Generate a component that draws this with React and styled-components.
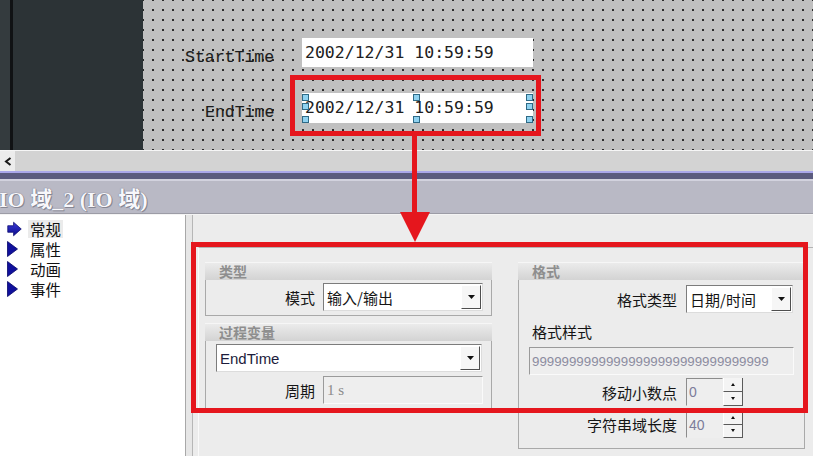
import React from "react";
import styled, { createGlobalStyle } from "styled-components";

const GlobalStyle = createGlobalStyle`
  html, body {
    margin: 0;
    padding: 0;
    background: #ececec;
    overflow: hidden;
  }
  #root {
    width: 813px;
    height: 456px;
  }
`;

const CJK = `"Noto Sans CJK SC", "Noto Sans", sans-serif`;
const RED = "#e5161d";

const Screen = styled.div`
  position: relative;
  width: 813px;
  height: 456px;
  overflow: hidden;
  display: flex;
  flex-direction: column;
  font-family: ${CJK};
  color: #141414;
`;

/* ---------- screen editor (top) ---------- */

const EditorArea = styled.div`
  display: flex;
  height: 150px;
  flex: none;
`;

const DarkPanel = styled.div`
  width: 143px;
  background: linear-gradient(to right, #343b3e 0 10px, #101214 10px 13px, #2c3336 13px);
`;

const Canvas = styled.div`
  position: relative;
  flex: 1;
  background-color: #c0c0c0;
  background-image: radial-gradient(circle, #2a2a2a 0 0.9px, transparent 1.4px);
  background-size: 10px 10px;
  background-position: -5px -5px;
`;

const CanvasLabel = styled.div`
  position: absolute;
  left: ${(p) => p.$x}px;
  top: ${(p) => p.$y}px;
  font-family: "Liberation Mono", "DejaVu Sans Mono", monospace;
  font-size: 16.5px;
  line-height: 20px;
  color: #1c1c1c;
  -webkit-text-stroke: 0.15px #1c1c1c;
  white-space: nowrap;
`;

const IOField = styled.div`
  position: absolute;
  left: ${(p) => p.$x}px;
  top: ${(p) => p.$y}px;
  width: 231px;
  height: ${(p) => p.$h}px;
  background: #ffffff;
  padding-left: 3px;
  box-sizing: border-box;
  font-family: "DejaVu Sans Mono", "Liberation Mono", monospace;
  font-size: 16.5px;
  line-height: ${(p) => p.$h}px;
  color: #202020;
  white-space: nowrap;
`;

const Handle = styled.span`
  position: absolute;
  left: ${(p) => p.$x}px;
  top: ${(p) => p.$y}px;
  width: 5px;
  height: 5px;
  background: #8fd2f0;
  border: 1px solid #2e6a86;
`;

/* ---------- scroll bar + inspector title ---------- */

const ScrollRow = styled.div`
  display: flex;
  height: 20px;
  flex: none;
  border-top: 1px solid #f6f6f6;
  background: #d3d3d3;
`;

const ScrollButton = styled.div`
  width: 15px;
  display: flex;
  align-items: center;
  justify-content: center;
  background: #ececec;
`;

const AccentBar = styled.div`
  height: 6px;
  flex: none;
  background: #5b5b7f;
  border-top: 2px solid #aaa7ea;
  border-bottom: 2px solid #d2d2de;
`;

const TitleBar = styled.div`
  height: 32px;
  flex: none;
  background: #b9b9c5;
  border-bottom: 1px solid #9c9ca6;
  display: flex;
  align-items: center;
`;

const Title = styled.span`
  margin-left: -1px;
  font-family: "Liberation Serif", "Noto Sans CJK SC", serif;
  font-weight: bold;
  font-size: 22px;
  color: #f7f7fb;
  text-shadow: 0 0 1px #55556a, 1px 1px 0 #8c8c98;
  white-space: nowrap;
`;

const TitleGap = styled.div`
  height: 1px;
  flex: none;
  background: #f4f4f4;
`;

/* ---------- inspector body ---------- */

const Body = styled.div`
  flex: 1;
  display: flex;
  min-height: 0;
`;

const Tree = styled.div`
  width: 185px;
  background: #ffffff;
  border-right: 1px solid #a8a8a8;
  padding-top: 4px;
  box-sizing: content-box;
`;

const TreeItem = styled.div`
  display: flex;
  align-items: center;
  height: 20px;
  padding-left: 7px;
  gap: 8px;
`;

const TreeText = styled.span`
  font-size: 15.5px;
  line-height: 18px;
  padding: 0 2px;
  margin-left: -2px;
  background: ${(p) => (p.$active ? "#ebebeb" : "transparent")};
  color: #111;
`;

const IconBox = styled.span`
  width: 15px;
  height: 16px;
  display: flex;
  align-items: center;
`;

const Gutter = styled.div`
  width: 6px;
  background: #e6e6e6;
  border-right: 1px solid #b6b6b6;
`;

const MainPanel = styled.div`
  flex: 1;
  background: #ececec;
  padding-top: 32px;
`;

const InnerPanel = styled.div`
  margin-left: 5px;
  height: 100%;
  border-top: 1px solid #b4b4b4;
  border-left: 1px solid #fafafa;
  padding: 14px 0 0 6px;
  display: flex;
  gap: 26px;
`;

const Column = styled.div`
  width: 287px;
  display: flex;
  flex-direction: column;
  gap: 7px;
`;

const Group = styled.div`
  display: flex;
  flex-direction: column;
`;

const GroupHeader = styled.div`
  height: 18px;
  background: linear-gradient(#ebebeb, #d3d3d3);
  border-top: 1px solid #f6f6f6;
  box-sizing: border-box;
  padding-left: 14px;
  font-size: 14px;
  font-weight: bold;
  line-height: 17px;
  color: #8e8e8e;
`;

const GroupBody = styled.div`
  border: 1px solid #a9a9a9;
  border-top: none;
  padding: ${(p) => p.$pad};
  display: flex;
  flex-direction: column;
  gap: ${(p) => p.$gap || 0}px;
`;

const FormRow = styled.div`
  display: grid;
  grid-template-columns: ${(p) => p.$label}px auto;
  column-gap: ${(p) => p.$gap}px;
  align-items: center;
  margin-top: ${(p) => p.$top || 0}px;
`;

const FieldLabel = styled.span`
  text-align: right;
  font-size: 15px;
  color: #151515;
  white-space: nowrap;
`;

const PlainLabel = styled.div`
  font-size: 15px;
  line-height: 18px;
  padding-left: 13px;
  margin-top: ${(p) => p.$top}px;
`;

const ComboBox = styled.div`
  display: flex;
  width: ${(p) => p.$w}px;
  height: ${(p) => p.$h || 28}px;
  margin-left: ${(p) => p.$left || 0}px;
  box-sizing: border-box;
  background: #ffffff;
  border: 1px solid;
  border-color: #7c7c7c #dcdcdc #dcdcdc #7c7c7c;
`;

const ComboText = styled.span`
  flex: 1;
  padding-left: 3px;
  align-self: center;
  font-size: ${(p) => p.$size || 15}px;
  font-family: ${(p) => (p.$latin ? `"Liberation Sans", ${CJK}` : CJK)};
  color: ${(p) => p.$color || "#151515"};
  white-space: nowrap;
  overflow: hidden;
`;

const DropButton = styled.span`
  width: 18px;
  margin: 1px 1px 1px 0;
  display: flex;
  align-items: center;
  justify-content: center;
  background: #f6f6f6;
  border-right: 1px solid #4e4e4e;
  border-bottom: 1px solid #4e4e4e;
  border-top: 1px solid #ffffff;
  border-left: 1px solid #ffffff;
`;

const ReadOnlyField = styled.div`
  width: ${(p) => p.$w}px;
  height: ${(p) => p.$h || 28}px;
  margin-left: ${(p) => p.$left || 0}px;
  margin-top: ${(p) => p.$top || 0}px;
  box-sizing: border-box;
  background: #eeeeee;
  border: 1px solid;
  border-color: #9a9a9a #fafafa #fafafa #9a9a9a;
  padding-left: ${(p) => p.$padL || 8}px;
  display: flex;
  align-items: center;
  font-family: ${(p) => p.$font};
  font-size: ${(p) => p.$size}px;
  color: ${(p) => p.$color};
  white-space: nowrap;
  overflow: hidden;
`;

const SpinBox = styled.div`
  display: flex;
  width: 57px;
  height: ${(p) => p.$h}px;
`;

const SpinValue = styled.div`
  flex: 1;
  box-sizing: border-box;
  background: #eeeeee;
  border: 1px solid;
  border-color: #8c8c8c #eeeeee #eeeeee #8c8c8c;
  padding-left: 2px;
  display: flex;
  align-items: center;
  font-family: "Liberation Sans", sans-serif;
  font-size: 14px;
  color: #7c7c9a;
`;

const SpinButtons = styled.div`
  width: 20px;
  display: flex;
  flex-direction: column;
`;

const SpinButton = styled.span`
  flex: 1;
  display: flex;
  align-items: center;
  justify-content: center;
  background: #f4f4f4;
  border-right: 1px solid #5a5a5a;
  border-bottom: 1px solid #5a5a5a;
  border-left: 1px solid #ffffff;
`;

/* ---------- red annotations ---------- */

const RedFrame = styled.div`
  position: absolute;
  left: ${(p) => p.$x}px;
  top: ${(p) => p.$y}px;
  width: ${(p) => p.$w}px;
  height: ${(p) => p.$h}px;
  box-sizing: border-box;
  border: 5px solid ${RED};
  pointer-events: none;
`;

const ArrowSvg = styled.svg`
  position: absolute;
  left: 398px;
  top: 134px;
`;

/* ---------- icons ---------- */

const Caret = ({ up }) => (
  <svg width="7" height="4" viewBox="0 0 7 4">
    <path d={up ? "M0 4 L3.5 0 L7 4 Z" : "M0 0 L7 0 L3.5 4 Z"} fill="#111" />
  </svg>
);

const TinyCaret = ({ up }) => (
  <svg width="4" height="3" viewBox="0 0 4 3">
    <path d={up ? "M0 3 L2 0 L4 3 Z" : "M0 0 L4 0 L2 3 Z"} fill="#111" />
  </svg>
);

const BlockArrow = () => (
  <svg width="16" height="16" viewBox="0 0 16 16">
    <defs>
      <linearGradient id="ba" x1="0" y1="0" x2="0" y2="1">
        <stop offset="0" stopColor="#3c3cd8" />
        <stop offset="1" stopColor="#0c0c8c" />
      </linearGradient>
    </defs>
    <path
      d="M0.8 4.5 H7 V0.8 L15.2 8 L7 15.2 V11.5 H0.8 Z"
      fill="url(#ba)"
      stroke="#0a0a70"
      strokeWidth="0.8"
      strokeLinejoin="round"
    />
  </svg>
);

const Triangle = () => (
  <svg width="11" height="16" viewBox="0 0 11 16">
    <path d="M0.5 0.5 L10.5 8 L0.5 15.5 Z" fill="#10109c" stroke="#08086a" strokeWidth="0.8" />
  </svg>
);

const ScrollLeft = () => (
  <svg width="8" height="9" viewBox="0 0 8 9">
    <path d="M6.5 1 L2 4.5 L6.5 8" fill="none" stroke="#1a1a1a" strokeWidth="2" />
  </svg>
);

const Combo = ({ w, left, text, latin, size, color }) => (
  <ComboBox $w={w} $left={left}>
    <ComboText $latin={latin} $size={size} $color={color}>
      {text}
    </ComboText>
    <DropButton>
      <Caret />
    </DropButton>
  </ComboBox>
);

const Spin = ({ value, h }) => (
  <SpinBox $h={h}>
    <SpinValue>{value}</SpinValue>
    <SpinButtons>
      <SpinButton>
        <TinyCaret up />
      </SpinButton>
      <SpinButton>
        <TinyCaret />
      </SpinButton>
    </SpinButtons>
  </SpinBox>
);

const treeItems = [
  { label: "常规", active: true },
  { label: "属性" },
  { label: "动画" },
  { label: "事件" },
];

export default function App() {
  return (
    <>
      <GlobalStyle />
      <Screen>
        <EditorArea>
          <DarkPanel />
          <Canvas>
            <CanvasLabel $x={42} $y={48}>StartTime</CanvasLabel>
            <IOField $x={159} $y={38} $h={29}>
              2002/12/31 10:59:59
            </IOField>
            <CanvasLabel $x={62} $y={103}>EndTime</CanvasLabel>
            <IOField $x={159} $y={93} $h={30}>
              2002/12/31 10:59:59
              <Handle $x={0} $y={1} />
              <Handle $x={0} $y={10} />
              <Handle $x={0} $y={23} />
              <Handle $x={111} $y={1} />
              <Handle $x={111} $y={23} />
              <Handle $x={224} $y={1} />
              <Handle $x={224} $y={10} />
              <Handle $x={224} $y={23} />
            </IOField>
          </Canvas>
        </EditorArea>

        <ScrollRow>
          <ScrollButton>
            <ScrollLeft />
          </ScrollButton>
        </ScrollRow>
        <AccentBar />
        <TitleBar>
          <Title>IO 域_2 (IO 域)</Title>
        </TitleBar>
        <TitleGap />

        <Body>
          <Tree>
            {treeItems.map((it) => (
              <TreeItem key={it.label}>
                <IconBox>{it.active ? <BlockArrow /> : <Triangle />}</IconBox>
                <TreeText $active={it.active}>{it.label}</TreeText>
              </TreeItem>
            ))}
          </Tree>
          <Gutter />
          <MainPanel>
            <InnerPanel>
              <Column>
                <Group>
                  <GroupHeader>类型</GroupHeader>
                  <GroupBody $pad="3px 0 4px">
                    <FormRow $label={109} $gap={8}>
                      <FieldLabel>模式</FieldLabel>
                      <Combo w={160} text="输入/输出" />
                    </FormRow>
                  </GroupBody>
                </Group>
                <Group>
                  <GroupHeader>过程变量</GroupHeader>
                  <GroupBody $pad="3px 0 8px" $gap={4}>
                    <Combo w={266} left={10} text="EndTime" latin size={15} color="#1c1c3c" />
                    <FormRow $label={109} $gap={8}>
                      <FieldLabel>周期</FieldLabel>
                      <ReadOnlyField
                        $w={160}
                        $padL={3}
                        $font={`"Liberation Serif", serif`}
                        $size={15}
                        $color="#8a8a8a"
                      >
                        1 s
                      </ReadOnlyField>
                    </FormRow>
                  </GroupBody>
                </Group>
              </Column>

              <Column>
                <Group>
                  <GroupHeader>格式</GroupHeader>
                  <GroupBody $pad="5px 0 10px">
                    <FormRow $label={158} $gap={9}>
                      <FieldLabel>格式类型</FieldLabel>
                      <Combo w={107} text="日期/时间" />
                    </FormRow>
                    <PlainLabel $top={10}>格式样式</PlainLabel>
                    <ReadOnlyField
                      $w={265}
                      $left={10}
                      $top={6}
                      $padL={2}
                      $font={`"Liberation Sans", sans-serif`}
                      $size={13.3}
                      $color="#8c8ca0"
                    >
                      99999999999999999999999999999999
                    </ReadOnlyField>
                    <FormRow $label={158} $gap={9} $top={3}>
                      <FieldLabel>移动小数点</FieldLabel>
                      <Spin value="0" h={28} />
                    </FormRow>
                    <FormRow $label={158} $gap={9} $top={5}>
                      <FieldLabel>字符串域长度</FieldLabel>
                      <Spin value="40" h={27} />
                    </FormRow>
                  </GroupBody>
                </Group>
              </Column>
            </InnerPanel>
          </MainPanel>
        </Body>

        <RedFrame $x={290} $y={75} $w={251} $h={61} />
        <ArrowSvg width="34" height="110" viewBox="0 0 34 110">
          <rect x="14" y="1" width="5" height="78" fill={RED} />
          <path d="M2 78 L32 78 L17 108 Z" fill={RED} />
        </ArrowSvg>
        <RedFrame $x={191} $y={242} $w={617} $h={171} />
      </Screen>
    </>
  );
}
